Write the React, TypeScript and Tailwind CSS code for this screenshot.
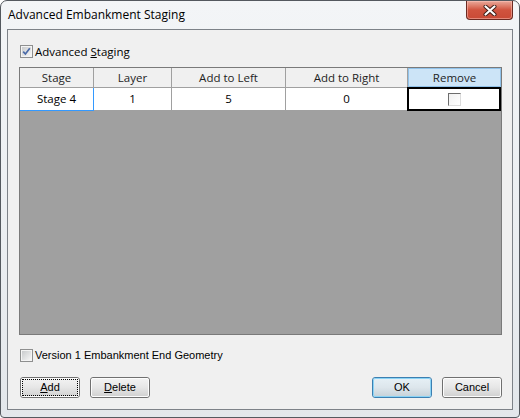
const columns = [
  { title: 'Stage', value: 'Stage 4', w: 'w-[74px]' },
  { title: 'Layer', value: '1', w: 'w-[78px]' },
  { title: 'Add to Left', value: '5', w: 'w-[114px]' },
  { title: 'Add to Right', value: '0', w: 'w-[122px]' },
];

const uiFont = { fontFamily: '"Open Sans", "Noto Sans", sans-serif' };
const sansFont = { fontFamily: '"Liberation Sans", Arial, sans-serif' };

function CheckBox({ checked }: { checked?: boolean }) {
  return (
    <div className="flex h-[13px] w-[13px] items-center justify-center border border-[#8e8f8f] bg-[#f4f4f4]">
      <div className="relative h-[11px] w-[11px] border border-[#f4f4f4] bg-gradient-to-br from-[#c9cbcd] to-[#f6f6f6]">
        {checked && (
          <svg viewBox="0 0 9 9" className="absolute left-0 top-0 h-[9px] w-[9px]">
            <path d="M1.2 4.6 L3.4 7 L7.8 1.2" fill="none" stroke="#4a6aa8" strokeWidth="1.7" />
          </svg>
        )}
      </div>
    </div>
  );
}

function Button({ label, hot, focused, primary }: { label: string; hot?: number; focused?: boolean; primary?: boolean }) {
  return (
    <div
      className={`flex h-[21px] w-[60px] items-center justify-center rounded-[3px] border ${
        primary ? 'border-[#3c7fb1]' : 'border-[#707070]'
      }`}
    >
      <div
        className={`flex h-full w-full items-center justify-center rounded-[2px] border ${
          primary
            ? 'border-[#8ad3f5] bg-gradient-to-b from-[#e5eff5] via-[#dde6ec] to-[#c8d3da]'
            : 'border-[#fcfcfc] bg-gradient-to-b from-[#f2f2f2] via-[#e6e6e6] to-[#d2d2d2]'
        }`}
      >
        <div
          className={`flex h-full w-full items-center justify-center text-[11px] text-black ${
            focused ? 'border border-dotted border-black' : ''
          }`}
          style={sansFont}
        >
          {hot === undefined ? (
            label
          ) : (
            <>
              {label.slice(0, hot)}
              <span className="underline underline-offset-1">{label.charAt(hot)}</span>
              {label.slice(hot + 1)}
            </>
          )}
        </div>
      </div>
    </div>
  );
}

export default function App() {
  return (
    <div className="h-[418px] w-[520px] overflow-hidden bg-white">
      <div className="flex h-[418px] w-[520px] flex-col rounded-t-[7px] rounded-b-[4px] border border-[#54595f] bg-gradient-to-b from-[#f3f5f7] via-[#eceff2] to-[#e3e7eb]">
        <div className="flex h-[28px] items-start justify-between">
          <div className="pl-[7px] pt-[6px] text-[12px] leading-[16px] text-black" style={uiFont}>
            Advanced Embankment Staging
          </div>
          <div className="mr-[6px] flex h-[19px] w-[47px] items-center justify-center rounded-b-[4px] border border-t-0 border-[#6a2a22] bg-gradient-to-b from-[#e9a99b] via-[#d0533e] to-[#c94a36] shadow-[inset_0_0_0_1px_rgba(255,200,190,0.5)]">
            <svg viewBox="0 0 14 11" className="h-[11px] w-[14px]">
              <path d="M2.5 1.5 L11.5 9.5 M11.5 1.5 L2.5 9.5" stroke="#3a1a14" strokeWidth="4" strokeLinecap="round" />
              <path d="M2.5 1.5 L11.5 9.5 M11.5 1.5 L2.5 9.5" stroke="#ffffff" strokeWidth="2.2" strokeLinecap="round" />
            </svg>
          </div>
        </div>

        <div className="mx-[6px] flex h-[381px] flex-col border border-[#7d8288] bg-[#f0f0f0] pl-[11px] pr-[10px]">
          <div className="mt-[15px] flex h-[13px] items-center gap-[2px] pl-px">
            <CheckBox checked />
            <span className="text-[11.5px] leading-[13px] text-black" style={uiFont}>
              Advanced <span className="underline underline-offset-1">S</span>taging
            </span>
          </div>

          <div className="mt-[9px] flex h-[268px] flex-col border border-[#7a7a7a] bg-[#a0a0a0]" style={uiFont}>
            <div className="flex h-[20px] border-b border-[#a0a0a0] bg-[#f0f0f0] text-[11.5px] text-[#1e1e1e]">
              {columns.map((c) => (
                <div key={c.title} className={`${c.w} flex items-center justify-center border-r border-[#a0a0a0]`}>
                  {c.title}
                </div>
              ))}
              <div className="flex flex-1 items-center justify-center border border-[#90c2ea] bg-[#cce4f7]">Remove</div>
            </div>
            <div className="flex h-[23px] border-b border-[#a0a0a0] bg-white text-[11.5px] text-black">
              {columns.map((c, i) => (
                <div
                  key={c.title}
                  className={`${c.w} flex items-center justify-center border-r ${
                    i === 0 ? 'mb-[-1px] border-b border-[#3399ff] border-r-[#3399ff]' : 'border-[#a0a0a0]'
                  }`}
                >
                  {c.value}
                </div>
              ))}
              <div className="-ml-px -mt-px mb-[-1px] flex flex-1 items-center justify-center border-2 border-black bg-white">
                <div className="h-[13px] w-[13px] border border-l-[#6d6d6d] border-t-[#6d6d6d] border-r-[#dcdcdc] border-b-[#dcdcdc] bg-gradient-to-br from-[#f0f0f0] to-white" />
              </div>
            </div>
            <div className="flex-1 bg-[#a0a0a0]" />
          </div>

          <div className="mt-[14px] flex h-[13px] items-center gap-[2px] pl-px">
            <CheckBox />
            <span className="text-[11px] leading-[13px] text-black" style={sansFont}>
              Version 1 Embankment End Geometry
            </span>
          </div>

          <div className="mt-[15px] flex items-center pl-px">
            <Button label="Add" hot={0} focused />
            <div className="ml-[10px]">
              <Button label="Delete" hot={0} />
            </div>
            <div className="ml-auto flex gap-[10px]">
              <Button label="OK" primary />
              <Button label="Cancel" />
            </div>
          </div>
        </div>
      </div>
    </div>
  );
}
